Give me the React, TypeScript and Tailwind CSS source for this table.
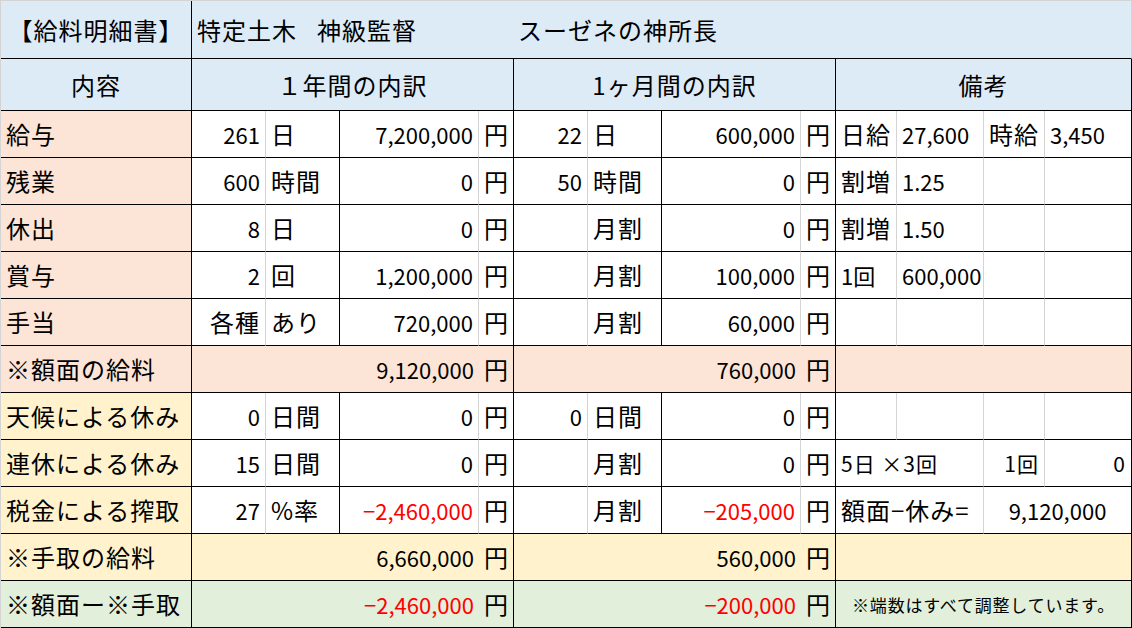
import React from "react";

type Br = "k" | "g" | "n";
type Al = "l" | "r" | "c";
type Cell = {
  t?: React.ReactNode;
  s?: 1 | 2 | 3 | 4 | 12;
  bg?: string;
  r?: Br;
  a?: Al;
  red?: boolean;
  sm?: boolean;
  xs?: boolean;
  j?: boolean;
};

const spanCls: Record<number, string> = {
  1: "col-span-1",
  2: "col-span-2",
  3: "col-span-3",
  4: "col-span-4",
  12: "col-span-12",
};
const rCls: Record<Br, string> = {
  k: "border-r border-r-black",
  g: "border-r border-r-[#d4d4d4]",
  n: "",
};
const aCls: Record<Al, string> = {
  l: "justify-start pl-[5px]",
  r: "justify-end pr-[5px]",
  c: "justify-center",
};

const BLUE = "bg-[#ddebf7]";
const SALMON = "bg-[#fce4d6]";
const YELLOW = "bg-[#fff2cc]";
const GREEN = "bg-[#e2efda]";
const WHITE = "bg-white";

function Td({ c }: { c: Cell }) {
  const cjk = c.j ?? (typeof c.t === "string" && c.t !== "" && !/[0-9]/.test(c.t));
  const size = c.xs
    ? "text-[17px] tracking-[0.8px]"
    : c.sm
    ? "text-[21px] tracking-[1px]"
    : cjk
    ? "text-[24px] tracking-[1px]"
    : "text-[22px]";
  const cls = [
    "flex items-center whitespace-nowrap overflow-visible border-b border-b-black",
    spanCls[c.s ?? 1],
    rCls[c.r ?? "g"],
    aCls[c.a ?? "l"],
    c.bg ?? WHITE,
    c.red ? "text-[#ff0000]" : "text-black",
    size,
  ].join(" ");
  return <div className={cls}>{c.t}</div>;
}

function dataRow(label: string, labelBg: string, v: (string | Cell)[]): Cell[] {
  const pattern: { a: Al; r: Br }[] = [
    { a: "r", r: "g" },
    { a: "l", r: "k" },
    { a: "r", r: "g" },
    { a: "l", r: "k" },
    { a: "r", r: "g" },
    { a: "l", r: "k" },
    { a: "r", r: "g" },
    { a: "l", r: "k" },
    { a: "l", r: "g" },
    { a: "l", r: "g" },
    { a: "l", r: "g" },
    { a: "l", r: "k" },
  ];
  const cells: Cell[] = [{ t: label, a: "l", r: "k", bg: labelBg }];
  v.forEach((x, i) => {
    if (typeof x === "string") cells.push({ t: x, ...pattern[i] });
    else cells.push({ ...pattern[i], ...x });
  });
  return cells;
}

const rows: Cell[][] = [
  [
    { t: "【給料明細書】", a: "c", r: "k", bg: BLUE },
    {
      s: 12,
      bg: BLUE,
      r: "g",
      a: "l",
      j: true,
      t: (
        <>
          <span className="flex w-[321px]">
            <span>特定土木</span>
            <span className="ml-[20px]">神級監督</span>
          </span>
          <span>スーゼネの神所長</span>
        </>
      ),
    },
  ],
  [
    { t: "内容", a: "c", r: "k", bg: BLUE },
    { t: "１年間の内訳", s: 4, a: "c", r: "k", bg: BLUE },
    { t: "1ヶ月間の内訳", s: 4, a: "c", r: "k", bg: BLUE, j: true },
    { t: "備考", s: 4, a: "c", r: "k", bg: BLUE },
  ],
  dataRow("給与", SALMON, ["261", "日", "7,200,000", "円", "22", "日", "600,000", "円", "日給", "27,600", "時給", "3,450"]),
  dataRow("残業", SALMON, ["600", "時間", "0", "円", "50", "時間", "0", "円", "割増", "1.25", "", ""]),
  dataRow("休出", SALMON, ["8", "日", "0", "円", "", "月割", "0", "円", "割増", "1.50", "", ""]),
  dataRow("賞与", SALMON, ["2", "回", "1,200,000", "円", "", "月割", "100,000", "円", "1回", "600,000", "", ""]),
  dataRow("手当", SALMON, ["各種", "あり", "720,000", "円", "", "月割", "60,000", "円", "", "", "", ""]),
  [
    { t: "※額面の給料", a: "l", r: "k", bg: SALMON },
    { t: "9,120,000", s: 3, a: "r", r: "n", bg: SALMON },
    { t: "円", a: "l", r: "k", bg: SALMON },
    { t: "760,000", s: 3, a: "r", r: "n", bg: SALMON },
    { t: "円", a: "l", r: "k", bg: SALMON },
    { t: "", s: 4, r: "k", bg: SALMON },
  ],
  dataRow("天候による休み", YELLOW, ["0", "日間", "0", "円", "0", "日間", "0", "円", "", "", "", ""]),
  [
    ...dataRow("連休による休み", YELLOW, ["15", "日間", "0", "円", "", "月割", "0", "円"]),
    { t: "5日 ×3回", s: 2, a: "l", r: "g", sm: true },
    { t: "1回", a: "r", r: "g", sm: true },
    { t: "0", a: "r", r: "k", sm: true },
  ],
  [
    ...dataRow("税金による搾取", YELLOW, [
      "27",
      "%率",
      { t: "−2,460,000", red: true },
      "円",
      "",
      "月割",
      { t: "−205,000", red: true },
      "円",
    ]),
    { t: "額面−休み=", s: 2, a: "l", r: "g" },
    { t: "9,120,000", s: 2, a: "c", r: "k" },
  ],
  [
    { t: "※手取の給料", a: "l", r: "k", bg: YELLOW },
    { t: "6,660,000", s: 3, a: "r", r: "n", bg: YELLOW },
    { t: "円", a: "l", r: "k", bg: YELLOW },
    { t: "560,000", s: 3, a: "r", r: "n", bg: YELLOW },
    { t: "円", a: "l", r: "k", bg: YELLOW },
    { t: "", s: 4, r: "k", bg: YELLOW },
  ],
  [
    { t: "※額面ー※手取", a: "l", r: "k", bg: GREEN },
    { t: "−2,460,000", s: 3, a: "r", r: "n", bg: GREEN, red: true },
    { t: "円", a: "l", r: "k", bg: GREEN },
    { t: "−200,000", s: 3, a: "r", r: "n", bg: GREEN, red: true },
    { t: "円", a: "l", r: "k", bg: GREEN },
    { t: "※端数はすべて調整しています。", s: 4, a: "c", r: "k", bg: GREEN, xs: true },
  ],
];

export default function App() {
  return (
    <div className="w-[1132px] h-[628px] bg-white border-t border-l border-[#d4d4d4] font-['Noto_Sans_CJK_JP',sans-serif] font-normal leading-none">
      <div className="grid grid-cols-[191px_74px_74px_139px_35px_74px_74px_139px_35px_61px_87px_61px_87px] grid-rows-[58px_52px_repeat(11,47px)]">
        {rows.map((row, i) => row.map((c, j) => <Td key={`${i}-${j}`} c={c} />))}
      </div>
    </div>
  );
}
